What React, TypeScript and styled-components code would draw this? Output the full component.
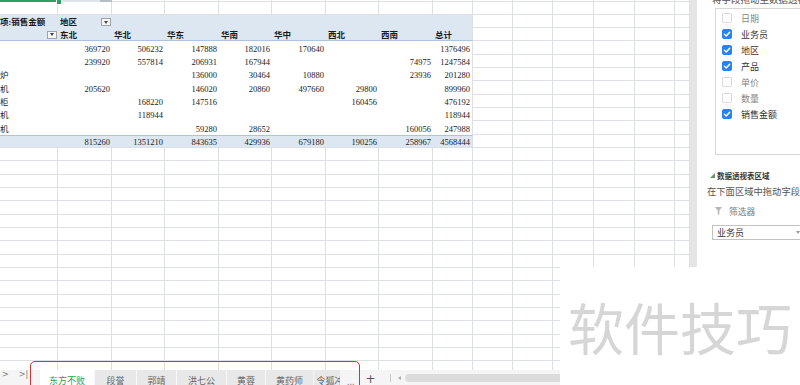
import React from 'react';
import styled, { createGlobalStyle } from 'styled-components';

const GRID = '#dcdfe3';
const BLUE = '#dde7f2';
const BLUE_LINE = '#aec3dd';
const SERIF = '"Liberation Serif", "Noto Sans CJK SC", serif';
const SANS = '"Noto Sans CJK SC", "Noto Sans", sans-serif';

const COLS = [58, 54, 53, 54, 53, 54, 53, 54, 40, 40, 40, 41, 41, 40, 15];
const TEMPLATE = COLS.map((c) => `${c}px`).join(' ');
const PIVOT_COLS = 9;

const REGIONS = ['东北', '华北', '华东', '华南', '华中', '西北', '西南', '总计'];
type Num = number | null;
const ROWS: { label: string; values: Num[]; h: number }[] = [
  { label: '', values: [369720, 506232, 147888, 182016, 170640, null, null, 1376496], h: 14 },
  { label: '', values: [239920, 557814, 206931, 167944, null, null, 74975, 1247584], h: 13 },
  { label: '炉', values: [null, null, 136000, 30464, 10880, null, 23936, 201280], h: 13 },
  { label: '机', values: [205620, null, 146020, 20860, 497660, 29800, null, 899960], h: 14 },
  { label: '柜', values: [null, 168220, 147516, null, null, 160456, null, 476192], h: 13 },
  { label: '机', values: [null, 118944, null, null, null, null, null, 118944], h: 13 },
  { label: '机', values: [null, null, 59280, 28652, null, null, 160056, 247988], h: 14 },
];
const TOTAL = [815260, 1351210, 843635, 429936, 679180, 190256, 258967, 4568444];
const EMPTY_ROWS = [13, 14, 13, 13, 14, 13, 13, 14, 13, 13, 14, 13, 13, 14, 13, 13, 14];

const FIELDS = [
  { name: '日期', on: false },
  { name: '业务员', on: true },
  { name: '地区', on: true },
  { name: '产品', on: true },
  { name: '单价', on: false },
  { name: '数量', on: false },
  { name: '销售金额', on: true },
];

const TABS = [
  { name: '东方不败', w: 55, active: true },
  { name: '段誉', w: 42 },
  { name: '郭靖', w: 40 },
  { name: '洪七公', w: 50 },
  { name: '黄蓉', w: 39 },
  { name: '黄药师', w: 48 },
  { name: '令狐冲', w: 33 },
];

const GlobalStyle = createGlobalStyle`
  html, body { margin: 0; padding: 0; background: #fff; }
  body { width: 800px; height: 385px; overflow: hidden; }
`;

const Screen = styled.div`
  position: relative;
  width: 800px;
  height: 385px;
  overflow: hidden;
  display: flex;
  background: #fff;
`;

const Workbook = styled.div`
  width: 690px;
  flex-shrink: 0;
  display: flex;
  flex-direction: column;
`;

const Sheet = styled.div`
  height: 370px;
  flex-shrink: 0;
  overflow: hidden;
  display: flex;
  flex-direction: column;
`;

const Row = styled.div<{ $h: number }>`
  display: grid;
  grid-template-columns: ${TEMPLATE};
  height: ${(p) => p.$h}px;
  flex-shrink: 0;
`;

const Cell = styled.div`
  box-sizing: border-box;
  border-right: 1px solid ${GRID};
  border-bottom: 1px solid ${GRID};
`;

const TopCell = styled.div<{ $tone: 'sel' | 'hl' | 'plain' }>`
  box-sizing: border-box;
  background: ${(p) =>
    p.$tone === 'sel'
      ? '#27a463'
      : p.$tone === 'hl'
      ? 'linear-gradient(to right, #dfe2e7 0 42px, #b8bcc3 42px)'
      : '#fff'};
  border-right: ${(p) => (p.$tone === 'plain' ? `1px solid ${GRID}` : 'none')};
  border-bottom: ${(p) => (p.$tone === 'plain' ? `1px solid ${GRID}` : 'none')};
`;

type Band = 'head' | 'headEnd' | 'data' | 'total';

const PivotCell = styled.div<{ $band: Band; $right?: boolean; $split?: boolean; $edge?: boolean }>`
  box-sizing: border-box;
  display: flex;
  align-items: center;
  justify-content: ${(p) => (p.$split ? 'space-between' : p.$right ? 'flex-end' : 'flex-start')};
  padding: 1px ${(p) => (p.$split ? 1 : 2)}px 0 ${(p) => (p.$right ? 0 : 2)}px;
  background: ${(p) => (p.$band === 'data' ? '#fff' : BLUE)};
  border-top: ${(p) => (p.$band === 'total' ? `1px solid ${BLUE_LINE}` : 'none')};
  border-bottom: ${(p) =>
    p.$band === 'headEnd'
      ? `1px solid ${BLUE_LINE}`
      : p.$band === 'total'
      ? `1px solid ${GRID}`
      : 'none'};
  border-right: ${(p) => (p.$edge ? `1px solid ${GRID}` : 'none')};
  font-family: ${SERIF};
  font-size: 8.5px;
  line-height: 10px;
  font-weight: ${(p) => (p.$band === 'head' || p.$band === 'headEnd' ? 700 : 400)};
  color: #1a1a1a;
  white-space: nowrap;
  overflow: hidden;
`;

const LabelText = styled.span`
  margin-left: -2px;
`;

const FilterBtn = styled.span`
  box-sizing: border-box;
  width: 10px;
  height: 8px;
  flex-shrink: 0;
  border: 1px solid #9ea3a8;
  background: #f4f5f6;
  display: flex;
  align-items: center;
  justify-content: center;
  &::after {
    content: '';
    border-left: 2.5px solid transparent;
    border-right: 2.5px solid transparent;
    border-top: 3px solid #444;
  }
`;

const FillHandle = styled.div`
  position: absolute;
  left: 56px;
  top: 0;
  width: 4px;
  height: 4px;
  background: #27a463;
  border: 1px solid #fff;
  border-top: none;
`;

/* ---------- tab bar ---------- */

const TabBar = styled.div`
  height: 20px;
  flex-shrink: 0;
  display: flex;
  align-items: stretch;
  background: #f5f5f5;
  font-family: ${SANS};
  font-size: 9px;
`;

const Nav = styled.div`
  width: 40px;
  flex-shrink: 0;
  display: flex;
  gap: 10px;
  padding-left: 2px;
  box-sizing: border-box;
  align-items: flex-start;
  color: #7a7a7a;
  font-family: "DejaVu Sans", sans-serif;
  font-size: 8px;
  line-height: 10px;
`;

const TabStrip = styled.div`
  width: 300px;
  flex-shrink: 0;
  display: flex;
  overflow: hidden;
`;

const Tab = styled.div<{ $w: number; $active?: boolean }>`
  width: ${(p) => p.$w}px;
  flex-shrink: 0;
  box-sizing: border-box;
  display: flex;
  align-items: center;
  justify-content: center;
  white-space: nowrap;
  background: ${(p) => (p.$active ? '#fff' : '#e8e8e8')};
  color: ${(p) => (p.$active ? '#1f9e5a' : '#666')};
  border-right: 1px solid #f7f7f7;
`;

const More = styled.span`
  margin-left: 7px;
  color: #888;
  display: flex;
  align-items: center;
  padding-top: 2px;
`;

const AddTab = styled.span`
  margin-left: 11px;
  color: #555;
  font-family: "DejaVu Sans", sans-serif;
  font-size: 12px;
  display: flex;
  align-items: center;
  padding-bottom: 3px;
`;

const Divider = styled.span`
  width: 1px;
  height: 8px;
  background: #c9c9c9;
  align-self: flex-start;
  margin: 4px 0 0 14px;
`;

const ScrollTrack = styled.div`
  flex: 1;
  display: flex;
  align-items: flex-start;
  padding: 4px 0 0 7px;
  gap: 4px;
`;

const ScrollArrow = styled.span`
  width: 0;
  height: 0;
  margin-top: 2px;
  border-top: 2px solid transparent;
  border-bottom: 2px solid transparent;
  border-right: 3px solid #aaa;
`;

const ScrollThumb = styled.span`
  flex: 1;
  height: 8px;
  border-radius: 4px;
  background: #dcdcdc;
`;

const Annotation = styled.div`
  position: absolute;
  left: 30px;
  top: 361px;
  width: 330px;
  height: 40px;
  box-sizing: border-box;
  border: 1.5px solid #d8322e;
  border-radius: 5px;
`;

/* ---------- right panel ---------- */

const Panel = styled.div`
  width: 110px;
  flex-shrink: 0;
  box-sizing: border-box;
  border-left: 7px solid #e5e5e5;
  background: #fff;
  padding-left: 10px;
  display: flex;
  flex-direction: column;
  font-family: ${SANS};
  overflow: hidden;
`;

const PanelHint = styled.div`
  margin: -7px 0 0 5px;
  font-size: 9.5px;
  line-height: 12px;
  color: #555;
  white-space: nowrap;
`;

const FieldList = styled.div`
  margin: 3px 0 0 8px;
  width: 100px;
  height: 147px;
  flex-shrink: 0;
  box-sizing: border-box;
  border: 1px solid #d6d6d6;
  padding-top: 1px;
  display: flex;
  flex-direction: column;
`;

const FieldItem = styled.div<{ $on: boolean }>`
  height: 16px;
  display: flex;
  align-items: center;
  padding-left: 6px;
  gap: 9px;
  font-size: 9px;
  color: ${(p) => (p.$on ? '#333' : '#858585')};
  white-space: nowrap;
`;

const Box = styled.span<{ $on: boolean }>`
  box-sizing: border-box;
  width: 10px;
  height: 10px;
  border-radius: 2px;
  display: flex;
  align-items: center;
  justify-content: center;
  background: ${(p) => (p.$on ? '#2d7ff4' : '#fff')};
  border: 1px solid ${(p) => (p.$on ? '#2d7ff4' : '#d9d9d9')};
`;

const SectionTitle = styled.div`
  margin: 15px 0 0 3px;
  height: 10px;
  display: flex;
  align-items: center;
  gap: 2px;
  font-size: 7.5px;
  font-weight: 700;
  color: #333;
  white-space: nowrap;
`;

const SectionHint = styled.div`
  margin-top: 5px;
  font-size: 9.3px;
  line-height: 12px;
  color: #555;
  white-space: nowrap;
`;

const AreaLabel = styled.div`
  margin: 8px 0 0 8px;
  height: 12px;
  display: flex;
  align-items: center;
  gap: 7px;
  font-size: 8.7px;
  color: #7a7a7a;
  white-space: nowrap;
`;

const Dropdown = styled.div`
  margin: 8px 0 0 5px;
  width: 92px;
  height: 15px;
  flex-shrink: 0;
  box-sizing: border-box;
  border: 1px solid #c2c2c2;
  display: flex;
  align-items: center;
  justify-content: space-between;
  padding: 0 3px 0 4px;
  font-size: 9px;
  color: #333;
  &::after {
    content: '';
    border-left: 2px solid transparent;
    border-right: 2px solid transparent;
    border-top: 3px solid #999;
  }
`;

const Watermark = styled.div`
  position: absolute;
  left: 560px;
  top: 267px;
  width: 240px;
  height: 118px;
  background: #fff;
  display: flex;
  align-items: center;
  padding-left: 8px;
  box-sizing: border-box;
  font-family: ${SANS};
  font-size: 56px;
  line-height: 1;
  color: #d6d6d6;
  white-space: nowrap;
  z-index: 2;
`;

const gridCells = (from: number, key: string) =>
  COLS.slice(from).map((_, i) => <Cell key={`${key}-${i}`} />);

const fmt = (v: Num) => (v === null ? '' : String(v));

export default function App() {
  return (
    <>
      <GlobalStyle />
      <Screen>
        <Workbook>
          <Sheet>
            <Row $h={2}>
              {COLS.map((_, i) => (
                <TopCell key={i} $tone={i === 0 ? 'sel' : i === 1 ? 'hl' : 'plain'} />
              ))}
            </Row>
            <Row $h={13}>{gridCells(0, 'r1')}</Row>

            <Row $h={13}>
              <PivotCell $band="head">
                <LabelText>项:销售金额</LabelText>
              </PivotCell>
              <PivotCell $band="head" $split>
                地区
                <FilterBtn />
              </PivotCell>
              {REGIONS.slice(1).map((_, i) => (
                <PivotCell key={i} $band="head" $edge={i === REGIONS.length - 2} />
              ))}
              {gridCells(PIVOT_COLS, 'h1')}
            </Row>

            <Row $h={13}>
              <PivotCell $band="headEnd" $right style={{ paddingRight: 1 }}>
                <FilterBtn />
              </PivotCell>
              {REGIONS.map((r, i) => (
                <PivotCell key={r} $band="headEnd" $edge={i === REGIONS.length - 1}>
                  {r}
                </PivotCell>
              ))}
              {gridCells(PIVOT_COLS, 'h2')}
            </Row>

            {ROWS.map((row, ri) => (
              <Row key={ri} $h={row.h}>
                <PivotCell $band="data">
                  <LabelText>{row.label}</LabelText>
                </PivotCell>
                {row.values.map((v, i) => (
                  <PivotCell key={i} $band="data" $right $edge={i === row.values.length - 1}>
                    {fmt(v)}
                  </PivotCell>
                ))}
                {gridCells(PIVOT_COLS, `d${ri}`)}
              </Row>
            ))}

            <Row $h={13}>
              <PivotCell $band="total" />
              {TOTAL.map((v, i) => (
                <PivotCell key={i} $band="total" $right $edge={i === TOTAL.length - 1}>
                  {v}
                </PivotCell>
              ))}
              {gridCells(PIVOT_COLS, 'tot')}
            </Row>

            {EMPTY_ROWS.map((h, i) => (
              <Row key={`e${i}`} $h={h}>
                {gridCells(0, `e${i}`)}
              </Row>
            ))}
          </Sheet>

          <TabBar>
            <Nav>
              <span>&gt;</span>
              <span>&gt;|</span>
            </Nav>
            <TabStrip>
              {TABS.map((t) => (
                <Tab key={t.name} $w={t.w} $active={t.active}>
                  {t.name}
                </Tab>
              ))}
            </TabStrip>
            <More>...</More>
            <AddTab>+</AddTab>
            <Divider />
            <ScrollTrack>
              <ScrollArrow />
              <ScrollThumb />
            </ScrollTrack>
          </TabBar>
        </Workbook>

        <Panel>
          <PanelHint>将字段拖动至数据透视表区域</PanelHint>
          <FieldList>
            {FIELDS.map((f) => (
              <FieldItem key={f.name} $on={f.on}>
                <Box $on={f.on}>
                  {f.on && (
                    <svg width="8" height="8" viewBox="0 0 8 8">
                      <path d="M1.4 4.2 L3.2 6 L6.7 2.2" fill="none" stroke="#fff" strokeWidth="1.4" strokeLinecap="round" strokeLinejoin="round" />
                    </svg>
                  )}
                </Box>
                {f.name}
              </FieldItem>
            ))}
          </FieldList>
          <SectionTitle>
            <svg width="5" height="5" viewBox="0 0 5 5">
              <polygon points="5,0 5,5 0,5" fill="#6f8f6f" />
            </svg>
            数据透视表区域
          </SectionTitle>
          <SectionHint>在下面区域中拖动字段</SectionHint>
          <AreaLabel>
            <svg width="7" height="8" viewBox="0 0 7 8">
              <path d="M0 0 H7 L4.3 3.4 V8 L2.7 7 V3.4 Z" fill="#b5b5b5" />
            </svg>
            筛选器
          </AreaLabel>
          <Dropdown>业务员</Dropdown>
        </Panel>

        <FillHandle />
        <Annotation />
        <Watermark>软件技巧</Watermark>
      </Screen>
    </>
  );
}
